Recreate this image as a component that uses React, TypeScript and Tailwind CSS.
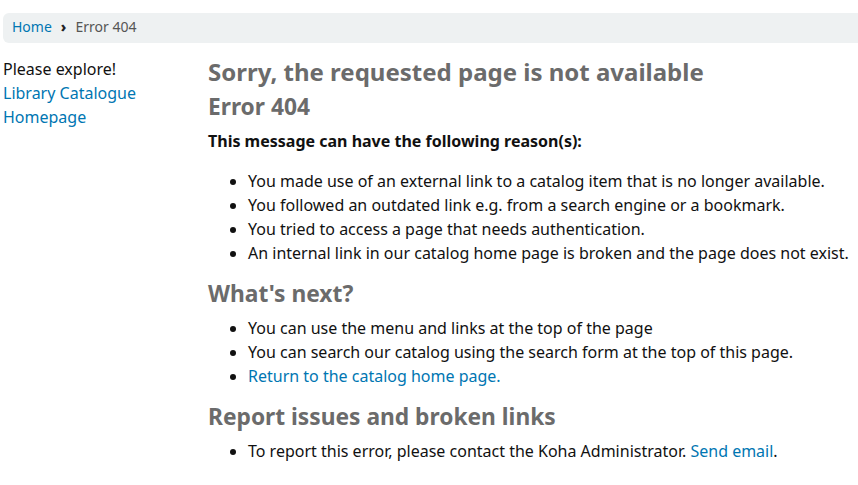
export default function App() {
  return (
    <div className="min-h-screen bg-white pl-[3px] font-['Noto_Sans',sans-serif] text-[16px] leading-[24px] text-[#111]">
      {/* Breadcrumb */}
      <nav className="mt-[13px] flex h-[30px] items-center rounded-l-[6px] bg-[#eef1f2] pb-[2px] pl-[9px] text-[14px]">
        <a href="#" className="text-[#0076b2]">Home</a>
        <span className="ml-[9px] mr-[9px] text-[14px] font-black text-[#222]">›</span>
        <span className="text-[#555]">Error 404</span>
      </nav>

      <div className="mt-[14px] flex">
        {/* Sidebar */}
        <div className="w-[205px] shrink-0">
          <p>Please explore!</p>
          <a href="#" className="block text-[#0076b2]">Library Catalogue</a>
          <a href="#" className="block text-[#0076b2]">Homepage</a>
        </div>

        {/* Main */}
        <div className="flex-1">
          <h1 className="text-[24px] font-bold leading-[30px] text-[#6b6b6b]">
            Sorry, the requested page is not available
          </h1>
          <h2 className="mt-[5px] text-[22.75px] font-bold leading-[30px] text-[#6b6b6b]">Error 404</h2>
          <p className="mt-[7px] font-bold">This message can have the following reason(s):</p>
          <ul className="mt-[16px] list-disc pl-[40px]">
            <li>You made use of an external link to a catalog item that is no longer available.</li>
            <li>You followed an outdated link e.g. from a search engine or a bookmark.</li>
            <li>You tried to access a page that needs authentication.</li>
            <li>An internal link in our catalog home page is broken and the page does not exist.</li>
          </ul>

          <h3 className="mt-[14px] text-[22.75px] font-bold leading-[30px] text-[#6b6b6b]">What's next?</h3>
          <ul className="mt-[7px] list-disc pl-[40px]">
            <li>You can use the menu and links at the top of the page</li>
            <li>You can search our catalog using the search form at the top of this page.</li>
            <li>
              <a href="#" className="text-[#0076b2]">Return to the catalog home page.</a>
            </li>
          </ul>

          <h3 className="mt-[14px] text-[22.75px] font-bold leading-[30px] text-[#6b6b6b]">
            Report issues and broken links
          </h3>
          <ul className="mt-[7px] list-disc pl-[40px]">
            <li>
              To report this error, please contact the Koha Administrator.{" "}
              <a href="#" className="text-[#0076b2]">Send email</a>.
            </li>
          </ul>
        </div>
      </div>
    </div>
  );
}
